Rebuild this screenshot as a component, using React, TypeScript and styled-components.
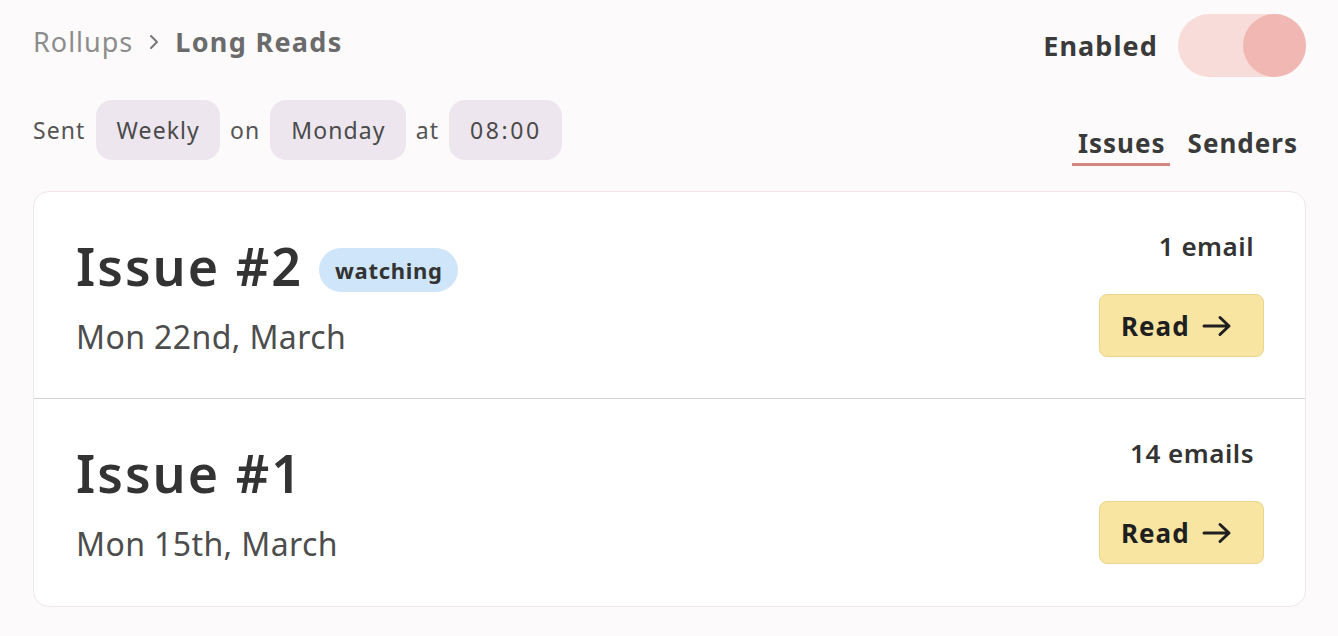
import React from "react";
import styled, { createGlobalStyle } from "styled-components";

const Global = createGlobalStyle`
  html, body { margin: 0; padding: 0; background: #fcfafa; }
  body { font-family: "Noto Sans", "DejaVu Sans", sans-serif; color: #333; }
  * { box-sizing: border-box; }
`;

const Page = styled.div`
  width: 1338px;
  height: 636px;
  padding: 14px 32px 0 33px;
  display: flex;
  flex-direction: column;
`;

const TopRow = styled.div`
  display: flex;
  justify-content: space-between;
  align-items: flex-start;
  height: 63px;
`;

const Crumbs = styled.div`
  display: flex;
  align-items: center;
  gap: 15px;
  font-size: 27px;
  line-height: 56px;
`;

const Crumb = styled.span<{ $current?: boolean }>`
  color: ${(p) => (p.$current ? "#6b6b6b" : "#8d8d8d")};
  font-weight: ${(p) => (p.$current ? 700 : 400)};
  letter-spacing: ${(p) => (p.$current ? "1.3px" : "1px")};
`;

const ToggleWrap = styled.div`
  display: flex;
  align-items: center;
  gap: 20px;
`;

const ToggleLabel = styled.span`
  font-size: 27px;
  font-weight: 700;
  letter-spacing: 1.1px;
  color: #3a3a3a;
`;

const Track = styled.div`
  width: 128px;
  height: 63px;
  border-radius: 32px;
  background: #f8dcda;
  display: flex;
  justify-content: flex-end;
`;

const Knob = styled.div`
  width: 63px;
  height: 63px;
  border-radius: 50%;
  background: #f1b7b2;
`;

const SecondRow = styled.div`
  display: flex;
  justify-content: space-between;
  align-items: flex-end;
  margin-top: 23px;
`;

const Schedule = styled.div`
  display: flex;
  align-items: center;
  gap: 10px;
  font-size: 23px;
  letter-spacing: 1.1px;
  color: #555;
`;

const Pill = styled.span<{ $numeric?: boolean }>`
  display: inline-flex;
  align-items: center;
  height: 60px;
  padding: 0 20px 0 21px;
  border-radius: 16px;
  background: #ede6ee;
  color: #4a4a4a;
  letter-spacing: ${(p) => (p.$numeric ? "2.6px" : "1.1px")};
`;

const Tabs = styled.div`
  display: flex;
  gap: 12px;
  margin: 0 4px -6px 0;
`;

const Tab = styled.span<{ $active?: boolean }>`
  font-size: 26px;
  font-weight: 700;
  letter-spacing: 1px;
  color: #3a3a3a;
  padding: 0 4px 2px 6px;
  border-bottom: 3px solid ${(p) => (p.$active ? "#d4857f" : "transparent")};
`;

const Card = styled.div`
  margin-top: 31px;
  background: #fff;
  border: 1px solid #f1e6e8;
  border-radius: 16px;
  display: flex;
  flex-direction: column;
`;

const Row = styled.div<{ $divider?: boolean }>`
  height: 207px;
  display: flex;
  justify-content: space-between;
  padding: 0 41px 0 42px;
  border-bottom: ${(p) => (p.$divider ? "1px solid #d2d2d2" : "none")};
`;

const Left = styled.div`
  display: flex;
  flex-direction: column;
  padding-top: 44px;
`;

const TitleLine = styled.div`
  display: flex;
  align-items: center;
  gap: 16px;
  height: 60px;
`;

const Title = styled.h2`
  margin: 0;
  font-size: 52px;
  font-weight: 600;
  letter-spacing: 2px;
  color: #333;
  line-height: 60px;
`;

const Badge = styled.span`
  display: inline-flex;
  align-items: center;
  height: 44px;
  margin-top: 8px;
  padding: 0 15px 0 16px;
  border-radius: 22px;
  background: #cfe5f9;
  font-size: 22px;
  font-weight: 700;
  letter-spacing: 0.7px;
  color: #333;
`;

const DateText = styled.div`
  margin-top: 19px;
  font-size: 32px;
  letter-spacing: 0.4px;
  color: #4d4d4d;
`;

const Right = styled.div`
  display: flex;
  flex-direction: column;
  align-items: flex-end;
  padding-top: 36px;
`;

const Count = styled.div`
  font-size: 26px;
  font-weight: 600;
  letter-spacing: 0.5px;
  color: #333;
  margin-right: 10px;
`;

const ReadButton = styled.button`
  margin-top: 30px;
  width: 165px;
  height: 63px;
  border: 1px solid #ead58e;
  border-radius: 8px;
  background: #f9e5a2;
  display: flex;
  align-items: center;
  justify-content: flex-start;
  gap: 12px;
  font-family: inherit;
  font-size: 26px;
  font-weight: 700;
  letter-spacing: 1px;
  color: #1f1f1f;
  padding: 0 0 0 21px;
`;

const Arrow = () => (
  <svg width="30" height="22" viewBox="0 0 30 22" fill="none">
    <path d="M2 11h25M18 2.5l9 8.5-9 8.5" stroke="#1f1f1f" strokeWidth="3" strokeLinecap="round" strokeLinejoin="round" />
  </svg>
);

const Chevron = () => (
  <svg width="12" height="18" viewBox="0 0 12 18" fill="none">
    <path d="M3 3l6 6-6 6" stroke="#777" strokeWidth="2" strokeLinecap="round" strokeLinejoin="round" />
  </svg>
);

const issues = [
  { title: "Issue #2", watching: true, date: "Mon 22nd, March", count: "1 email" },
  { title: "Issue #1", watching: false, date: "Mon 15th, March", count: "14 emails" },
];

export default function App() {
  return (
    <>
      <Global />
      <Page>
        <TopRow>
          <Crumbs>
            <Crumb>Rollups</Crumb>
            <Chevron />
            <Crumb $current>Long Reads</Crumb>
          </Crumbs>
          <ToggleWrap>
            <ToggleLabel>Enabled</ToggleLabel>
            <Track>
              <Knob />
            </Track>
          </ToggleWrap>
        </TopRow>
        <SecondRow>
          <Schedule>
            <span>Sent</span>
            <Pill>Weekly</Pill>
            <span>on</span>
            <Pill>Monday</Pill>
            <span>at</span>
            <Pill $numeric>08:00</Pill>
          </Schedule>
          <Tabs>
            <Tab $active>Issues</Tab>
            <Tab>Senders</Tab>
          </Tabs>
        </SecondRow>
        <Card>
          {issues.map((it, i) => (
            <Row key={it.title} $divider={i < issues.length - 1}>
              <Left>
                <TitleLine>
                  <Title>{it.title}</Title>
                  {it.watching && <Badge>watching</Badge>}
                </TitleLine>
                <DateText>{it.date}</DateText>
              </Left>
              <Right>
                <Count>{it.count}</Count>
                <ReadButton>
                  Read <Arrow />
                </ReadButton>
              </Right>
            </Row>
          ))}
        </Card>
      </Page>
    </>
  );
}
